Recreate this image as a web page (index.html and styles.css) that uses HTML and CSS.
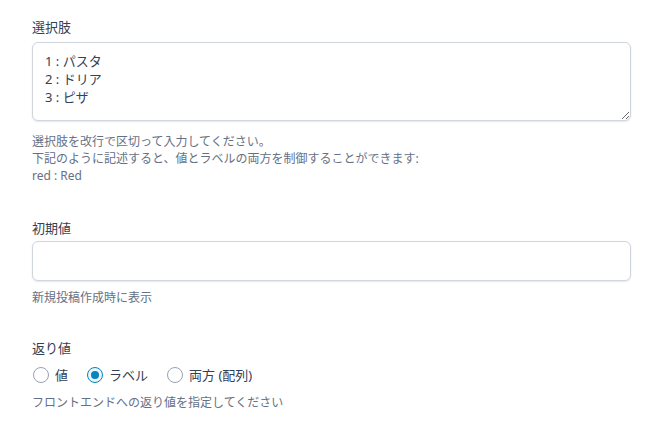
FILE: index.html
```html
<!DOCTYPE html>
<html lang="ja">
<head>
<meta charset="utf-8">
<link rel="stylesheet" href="styles.css">
</head>
<body>
<div class="settings">
  <div class="field field-choices">
    <label class="label" for="choices">選択肢</label>
    <textarea id="choices" class="textarea">1 : パスタ
2 : ドリア
3 : ピザ</textarea>
    <p class="help help-choices">選択肢を改行で区切って入力してください。<br>下記のように記述すると、値とラベルの両方を制御することができます:<br>red : Red</p>
  </div>

  <div class="field field-default">
    <label class="label" for="default">初期値</label>
    <input id="default" class="input" type="text">
    <p class="help">新規投稿作成時に表示</p>
  </div>

  <div class="field field-return">
    <div class="label">返り値</div>
    <div class="radios">
      <span class="radio"><span class="dot"></span>値</span>
      <span class="radio checked"><span class="dot"></span>ラベル</span>
      <span class="radio"><span class="dot"></span>両方 (配列)</span>
    </div>
    <p class="help">フロントエンドへの返り値を指定してください</p>
  </div>
</div>
</body>
</html>
```

FILE: styles.css
```css
* { box-sizing: border-box; }
html, body { margin: 0; padding: 0; background: #ffffff; }
body {
  font-family: "Noto Sans", "Noto Sans CJK JP", sans-serif;
  color: #344054;
  font-size: 13px;
}
.settings {
  padding: 17px 28px 0 32px;
  display: flex;
  flex-direction: column;
}
.field { display: flex; flex-direction: column; }
.label {
  font-size: 13px;
  line-height: 20px;
  color: #344054;
  margin-bottom: 5px;
}
.textarea {
  display: block;
  width: 599px;
  height: 79px;
  padding: 9px 12px;
  font-family: "Noto Sans", "Noto Sans CJK JP", sans-serif;
  font-size: 13px;
  line-height: 18px;
  color: #344054;
  border: 1px solid #d0d5dd;
  border-radius: 6px;
  box-shadow: 0 1px 2px rgba(16, 24, 40, 0.1);
  resize: vertical;
  outline: none;
}
.input {
  display: block;
  width: 599px;
  height: 40px;
  padding: 0 12px;
  border: 1px solid #d0d5dd;
  border-radius: 6px;
  box-shadow: 0 1px 2px rgba(16, 24, 40, 0.1);
  outline: none;
}
.help {
  margin: 8px 0 0;
  font-size: 12px;
  line-height: 17px;
  color: #667085;
}
.help-choices { margin-top: 12px; }
.field-default { margin-top: 34px; }
.field-default .label { margin-bottom: 3px; }
.field-return { margin-top: 32px; }
.field-return .label { margin-bottom: 7px; }
.field-return .help { margin-top: 9px; }
.radios {
  display: flex;
  gap: 18px;
  line-height: 20px;
  color: #344054;
}
.radio {
  display: inline-flex;
  align-items: center;
  gap: 6px;
}
.dot {
  width: 16px;
  height: 16px;
  border-radius: 50%;
  border: 1px solid #98a2b3;
  background: #fff;
  margin-left: 1px;
  display: inline-flex;
  align-items: center;
  justify-content: center;
}
.radio.checked .dot {
  border-color: #0783be;
  background: #ebf5fa;
}
.radio.checked .dot::after {
  content: "";
  width: 8px;
  height: 8px;
  border-radius: 50%;
  background: #0783be;
}
```
